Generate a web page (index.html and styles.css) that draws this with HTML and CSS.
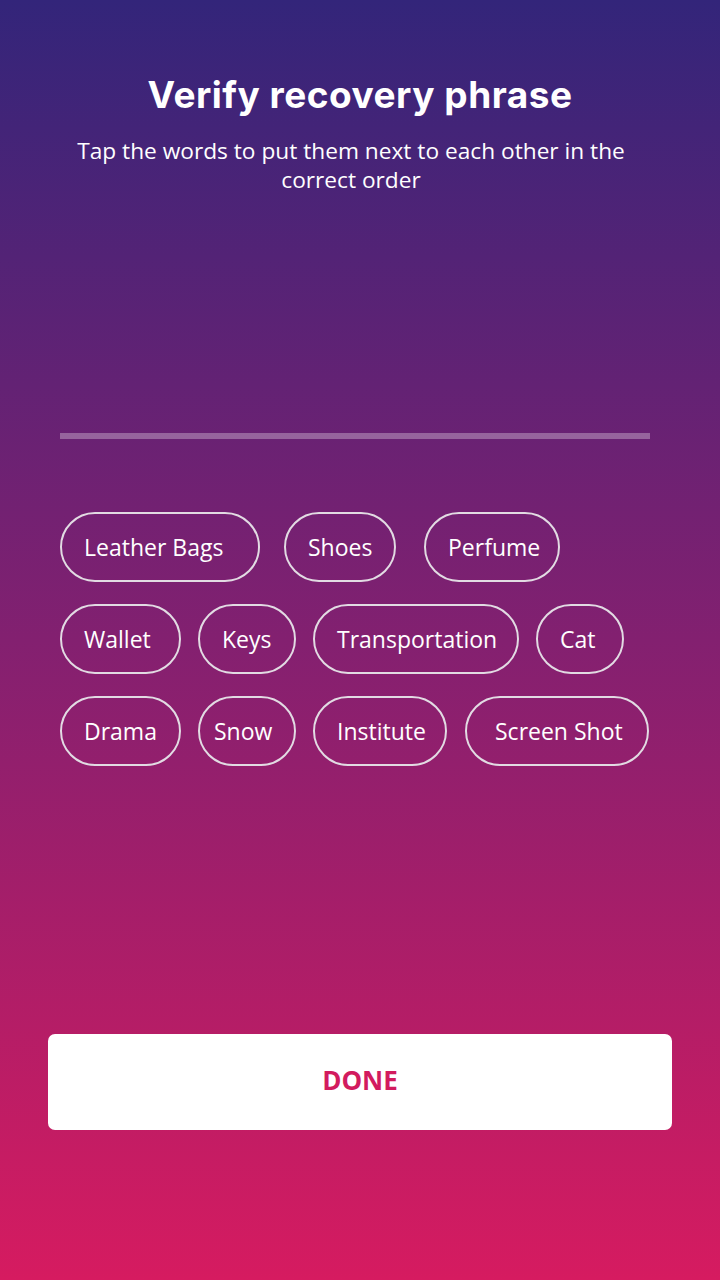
FILE: index.html
```html
<!DOCTYPE html>
<html>
<head>
<meta charset="utf-8">
<link rel="stylesheet" href="styles.css">
</head>
<body>
<div class="screen">
  <header class="head">
    <h1 class="title">Verify recovery phrase</h1>
    <p class="subtitle">Tap the words to put them next to each other in the correct order</p>
  </header>
  <div class="answer-area"></div>
  <div class="divider"></div>
  <div class="words">
    <div class="row row-first">
      <button class="chip w-leather">Leather Bags</button>
      <button class="chip w-shoes">Shoes</button>
      <button class="chip w-perfume">Perfume</button>
    </div>
    <div class="row">
      <button class="chip w-wallet">Wallet</button>
      <button class="chip w-keys">Keys</button>
      <button class="chip w-transport">Transportation</button>
      <button class="chip w-cat">Cat</button>
    </div>
    <div class="row">
      <button class="chip w-drama">Drama</button>
      <button class="chip w-snow">Snow</button>
      <button class="chip w-institute">Institute</button>
      <button class="chip w-screenshot">Screen Shot</button>
    </div>
  </div>
  <div class="spacer"></div>
  <div class="actions">
    <button class="done">DONE</button>
  </div>
</div>
</body>
</html>
```
FILE: styles.css
```css
html, body {
  margin: 0;
  padding: 0;
}
body {
  font-family: "Open Sans", "Noto Sans", sans-serif;
  color: #fff;
}
.screen {
  width: 720px;
  height: 1280px;
  box-sizing: border-box;
  display: flex;
  flex-direction: column;
  background: linear-gradient(180deg, #33257a 0%, #832070 50%, #d61b60 100%);
  padding: 70px 0 0;
}
.head {
  display: flex;
  flex-direction: column;
  align-items: center;
  padding: 0 60px;
}
.title {
  margin: 0;
  font-family: Inter, "Open Sans", sans-serif;
  font-weight: 700;
  font-size: 37px;
  line-height: 50px;
  letter-spacing: 0.5px;
}
.subtitle {
  margin: 16px 18px 0 0;
  font-size: 22.7px;
  line-height: 29px;
  font-weight: 400;
  text-align: center;
  max-width: 580px;
}
.answer-area {
  height: 239px;
}
.divider {
  margin: 0 70px 0 60px;
  height: 6px;
  background: rgba(255, 255, 255, 0.3);
}
.words {
  display: flex;
  flex-direction: column;
  gap: 22px;
  padding: 73px 0 0 60px;
}
.row {
  display: flex;
  gap: 17px;
}
.row-first {
  gap: 24px;
}
.chip {
  height: 70px;
  box-sizing: border-box;
  border: 2px solid #e2dbe3;
  border-radius: 35px;
  background: transparent;
  color: #fff;
  font-family: "Open Sans", "Noto Sans", sans-serif;
  font-size: 23px;
  padding: 0 0 0 22px;
  text-align: left;
  white-space: nowrap;
}
.w-leather { width: 200px; }
.w-shoes { width: 112px; }
.w-perfume { width: 136px; margin-left: 4px; }
.w-wallet { width: 121px; }
.w-keys { width: 98px; }
.w-transport { width: 206px; }
.w-cat { width: 88px; }
.w-drama { width: 121px; }
.w-snow { width: 98px; padding-left: 14px; }
.w-institute { width: 134px; }
.w-screenshot { width: 184px; margin-left: 1px; padding-left: 28px; }
.spacer {
  flex: 1;
}
.actions {
  padding: 0 48px 150px;
}
.done {
  width: 100%;
  height: 96px;
  border: none;
  border-radius: 7px;
  background: #fff;
  color: #d21b5e;
  font-family: "Open Sans", "Noto Sans", sans-serif;
  font-weight: 700;
  font-size: 26px;
  padding: 0 0 5px;
}
```
